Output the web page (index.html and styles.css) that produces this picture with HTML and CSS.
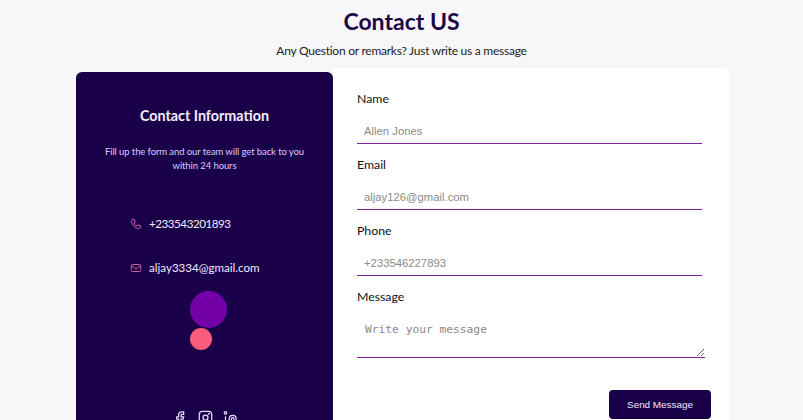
FILE: index.html
```html
<!DOCTYPE html>
<html lang="en">

<head>
    <meta charset="UTF-8">
    <meta name="viewport" content="width=device-width, initial-scale=1.0">
    <title>Contact Us</title>
    <link rel="stylesheet" href="styles.css">
</head>

<body>
    <header class="page-head">
        <h1>Contact US</h1>
        <p>Any Question or remarks? Just write us a message</p>
    </header>

    <main class="contact">
        <section class="info">
            <h2>Contact Information</h2>
            <p class="info-text">Fill up the form and our team will get back to you within 24 hours</p>

            <div class="info-row first">
                <svg class="info-icon" viewBox="0 0 24 24">
                    <path d="M5 3h3.500l2 5-2.500 1.800a12 12 0 0 0 6.200 6.200l1.800-2.500 5 2V19a2 2 0 0 1-2 2A16 16 0 0 1 3 5a2 2 0 0 1 2-2z" />
                </svg>
                <span>+233543201893</span>
            </div>
            <div class="info-row">
                <svg class="info-icon" viewBox="0 0 24 24">
                    <rect x="2.500" y="5" width="19" height="14" rx="2" />
                    <path d="M3 7.500l9 6 9-6" />
                </svg>
                <span>aljay3334@gmail.com</span>
            </div>

            <div class="circle big"></div>
            <div class="circle small"></div>

            <div class="socials">
                <svg class="social-icon" viewBox="0 0 24 24">
                    <path d="M17 3h-3a5 5 0 0 0-5 5v3H6v3.500h3V22h4v-7.500h3l1-3.500h-4V8a1 1 0 0 1 1-1h3z" />
                </svg>
                <svg class="social-icon" viewBox="0 0 24 24">
                    <rect x="2" y="2" width="20" height="20" rx="5" />
                    <circle cx="12" cy="12" r="4" />
                    <circle cx="17.500" cy="6.500" r="0.600" />
                </svg>
                <svg class="social-icon" viewBox="0 0 24 24">
                    <path d="M4 10v11" />
                    <circle cx="4" cy="4.500" r="2" />
                    <path d="M10 21V14a5.500 5.500 0 0 1 11 0v7h-3.500v-7a2 2 0 0 0-4 0v7z" />
                </svg>
            </div>
        </section>

        <form class="form">
            <div class="form-group">
                <label for="name">Name</label>
                <input type="text" id="name" placeholder="Allen Jones">
            </div>
            <div class="form-group">
                <label for="email">Email</label>
                <input type="email" id="email" placeholder="aljay126@gmail.com">
            </div>
            <div class="form-group">
                <label for="phone">Phone</label>
                <input type="tel" id="phone" placeholder="+233546227893">
            </div>
            <div class="form-group">
                <label for="message">Message</label>
                <textarea id="message" placeholder="Write your message"></textarea>
            </div>
            <div class="form-actions">
                <button type="submit">Send Message</button>
            </div>
        </form>
    </main>
</body>

</html>
```

FILE: styles.css
```css
* {
    box-sizing: border-box;
}

html,
body {
    height: 420px;
    overflow: hidden;
}

body {
    margin: 0;
    font-family: Lato, sans-serif;
    background-color: #f7f7f9;
    color: #111;
}

.page-head {
    text-align: center;
    padding-top: 6px;
}

.page-head h1 {
    margin: 0;
    font-size: 23px;
    line-height: 30px;
    font-weight: 700;
    color: #1a0845;
}

.page-head p {
    margin: 7px 0 0;
    font-size: 12px;
    line-height: 16px;
    letter-spacing: -0.250px;
    color: #222;
}

.contact {
    display: flex;
    align-items: flex-start;
    margin: 9px 74px 0 76px;
}

.info {
    position: relative;
    flex: 0 0 257px;
    height: 370px;
    margin-top: 4px;
    padding: 34px 25px 0;
    background-color: #1a0048;
    border-radius: 6px 6px 0 0;
    color: #fff;
    text-align: center;
}

.info h2 {
    margin: 0;
    font-size: 14.300px;
    line-height: 20px;
    font-weight: 700;
    color: #f4ecff;
}

.info-text {
    margin: 19px 0 0;
    font-size: 9.500px;
    line-height: 13.500px;
    letter-spacing: -0.100px;
    color: #dccbff;
}

.info-row {
    display: flex;
    align-items: center;
    gap: 7px;
    margin: 28px 0 0 29px;
    font-size: 11.600px;
    line-height: 16px;
    color: #f1e9ff;
}

.info-row.first {
    margin-top: 44px;
    letter-spacing: -0.450px;
}

.info-icon {
    width: 12px;
    height: 12px;
    fill: none;
    stroke: #c9609f;
    stroke-width: 2;
}

.circle {
    position: absolute;
    border-radius: 50%;
}

.circle.big {
    left: 114px;
    top: 219px;
    width: 37px;
    height: 37px;
    background-color: #7400a8;
}

.circle.small {
    left: 114px;
    top: 256px;
    width: 22px;
    height: 22px;
    background-color: #fb5c7c;
}

.socials {
    position: absolute;
    left: 97px;
    top: 338px;
    display: flex;
    gap: 10px;
}

.social-icon {
    width: 15px;
    height: 15px;
    fill: none;
    stroke: #e9dcff;
    stroke-width: 2;
}

.form {
    flex: 1;
    min-width: 0;
    height: 370px;
    padding: 23px 18px 0 24px;
    background-color: #fff;
    border-radius: 0 6px 0 0;
}

.form-group {
    display: flex;
    flex-direction: column;
    margin-bottom: 13px;
}

.form-group label {
    font-size: 12.300px;
    line-height: 16px;
    color: #111;
}

input,
textarea {
    border: none;
    border-bottom: 1px solid #7d22a2;
    outline: none;
    background: transparent;
}

input {
    width: 345px;
    height: 29px;
    margin-top: 8px;
    padding: 4px 7px 0;
    font-family: "Liberation Sans", sans-serif;
    font-size: 11.300px;
}

textarea {
    display: block;
    width: 348px;
    height: 45px;
    margin-top: 8px;
    padding: 10px 8px 0;
    font-family: "DejaVu Sans Mono", monospace;
    font-size: 11.250px;
}

input::placeholder,
textarea::placeholder {
    color: #8a8a8a;
    opacity: 1;
}

.form-actions {
    display: flex;
    justify-content: flex-end;
    width: 354px;
    margin-top: 32px;
}

button {
    width: 102px;
    height: 29px;
    border: none;
    border-radius: 4px;
    background-color: #1a0048;
    color: #efe6ff;
    font-family: "Liberation Sans", sans-serif;
    font-size: 9.900px;
}
```
